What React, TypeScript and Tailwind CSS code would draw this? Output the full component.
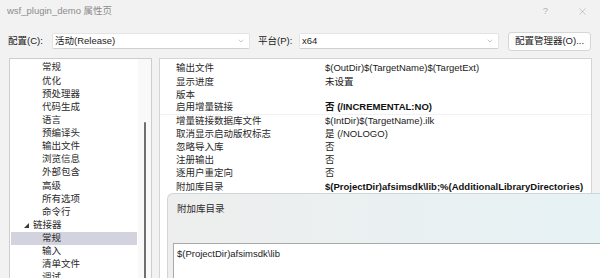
import { ChevronDown, X } from "lucide-react";

const font = "font-['Liberation_Sans','Noto_Sans_CJK_SC',sans-serif]";

const tree: { label: string; level: 1 | 2; open?: boolean; selected?: boolean }[] = [
  { label: "常规", level: 2 },
  { label: "优化", level: 2 },
  { label: "预处理器", level: 2 },
  { label: "代码生成", level: 2 },
  { label: "语言", level: 2 },
  { label: "预编译头", level: 2 },
  { label: "输出文件", level: 2 },
  { label: "浏览信息", level: 2 },
  { label: "外部包含", level: 2 },
  { label: "高级", level: 2 },
  { label: "所有选项", level: 2 },
  { label: "命令行", level: 2 },
  { label: "链接器", level: 1, open: true },
  { label: "常规", level: 2, selected: true },
  { label: "输入", level: 2 },
  { label: "清单文件", level: 2 },
  { label: "调试", level: 2 },
];

const props: { name: string; value: string; bold?: boolean }[] = [
  { name: "输出文件", value: "$(OutDir)$(TargetName)$(TargetExt)" },
  { name: "显示进度", value: "未设置" },
  { name: "版本", value: "" },
  { name: "启用增量链接", value: "否 (/INCREMENTAL:NO)", bold: true },
  { name: "增量链接数据库文件", value: "$(IntDir)$(TargetName).ilk" },
  { name: "取消显示启动版权标志", value: "是 (/NOLOGO)" },
  { name: "忽略导入库", value: "否" },
  { name: "注册输出", value: "否" },
  { name: "逐用户重定向", value: "否" },
  {
    name: "附加库目录",
    value: "$(ProjectDir)afsimsdk\\lib;%(AdditionalLibraryDirectories)",
    bold: true,
  },
];

function Combo({ text, width }: { text: string; width: string }) {
  return (
    <div
      className={`${width} flex h-[16px] items-center justify-between rounded-[2px] border border-[#e4e4e4] border-b-[#cfcfcf] bg-white pl-[2px] pr-[4px]`}
    >
      <span className="text-[#1a1a1a]">{text}</span>
      <ChevronDown size={8} strokeWidth={1.4} className="text-[#8a8a8a]" />
    </div>
  );
}

export default function App() {
  return (
    <div
      className={`relative h-[278px] w-[600px] overflow-hidden bg-[#f2f2f2] text-[9.5px] text-[#1a1a1a] ${font}`}
    >
      {/* Title bar */}
      <div className="flex h-[22px] items-center pl-[7px] pr-[12px]">
        <span className="text-[#8c8c8c]">wsf_plugin_demo 属性页</span>
        <span className="ml-auto mr-[29px] text-[#b0b0b0]">?</span>
        <X size={11} strokeWidth={1.1} className="text-[#9a9a9a]" />
      </div>

      {/* Configuration row */}
      <div className="mt-[9px] flex h-[20px] items-center pl-[8px]">
        <span className="w-[44px]">配置(C):</span>
        <Combo text="活动(Release)" width="w-[198px]" />
        <span className="ml-[8px] w-[41px]">平台(P):</span>
        <Combo text="x64" width="w-[200px]" />
        <button className="ml-[9px] flex h-[19px] w-[83px] items-center justify-center rounded-[3px] border border-[#d6d6d6] bg-[#fdfdfd]">
          配置管理器(O)...
        </button>
      </div>

      {/* Panels */}
      <div className="mt-[7px] flex h-[230px] pl-[9px]">
        {/* Tree */}
        <div className="flex w-[143px] border border-[#cdcdcd] bg-white">
          <div className="flex-1 pt-[2px]">
            {tree.map((t, i) => (
              <div
                key={i}
                className={`mx-[1px] flex h-[13.14px] items-center ${
                  t.selected ? "bg-[#d3d3df]" : ""
                } ${t.level === 2 ? "pl-[31px]" : "pl-[13px]"}`}
              >
                {t.open && (
                  <svg width="5" height="5" viewBox="0 0 5 5" className="mr-[4px]">
                    <polygon points="5,0 5,5 0,5" fill="#3a3a3a" />
                  </svg>
                )}
                <span className="text-[#2a2a2a]">{t.label}</span>
              </div>
            ))}
          </div>
          <div className="flex w-[13px] justify-center bg-[#f9f9f9] pt-[63px]">
            <div className="h-full w-[2px] rounded-full bg-[#6f6f6f]" />
          </div>
        </div>

        {/* Property grid */}
        <div className="ml-[7px] w-[433px] border border-[#d4d4d4] bg-white pt-[3px]">
          {props.map((p, i) => (
            <div
              key={i}
              className={`flex h-[13.14px] items-center pl-[16px] ${
                i === 3 ? "border-b border-[#f1f1f1]" : ""
              }`}
            >
              <span className="w-[149px] shrink-0 text-[#2a2a2a]">{p.name}</span>
              <span className={`whitespace-nowrap ${p.bold ? "font-bold text-[#111]" : ""}`}>
                {p.value}
              </span>
            </div>
          ))}
        </div>
      </div>

      {/* 附加库目录 dialog overlay */}
      <div className="absolute bottom-0 left-[167px] right-0 top-[193px] rounded-tl-[6px] border-l border-t border-[#cfd6d8] bg-linear-to-r from-[#eeeeee] to-[#e6f2f4]">
        <div className="pl-[9px] pt-[8px] text-[#2a2a2a]">附加库目录</div>
        <div className="absolute bottom-0 left-[5px] right-0 top-[49px] border-l border-t border-[#a9a9a9] bg-white pl-[3px] pt-[3px]">
          $(ProjectDir)afsimsdk\lib
        </div>
      </div>
    </div>
  );
}
